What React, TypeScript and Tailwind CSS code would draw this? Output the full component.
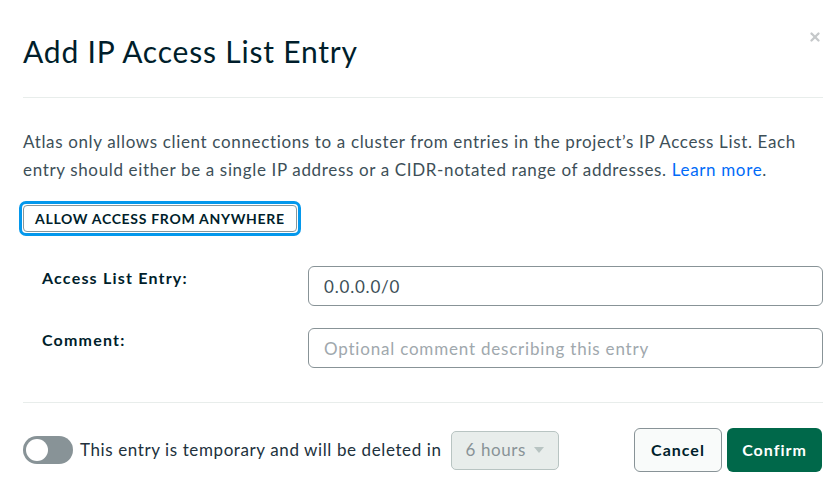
import { X } from 'lucide-react';

export default function App() {
  return (
    <div className="w-[838px] h-[499px] bg-white text-[#21313c] font-['Lato','Liberation_Sans',sans-serif]">
      {/* Header */}
      <div className="relative pl-[23px] pr-[15px] pt-[33px]">
        <h1 className="text-[30px] leading-[37px] font-normal tracking-[0.8px] text-[#001e2b]">Add IP Access List Entry</h1>
        <button className="absolute right-[16px] top-[30px] text-[#c5c8ca]">
          <X className="w-[14px] h-[14px]" strokeWidth={4} />
        </button>
        <div className="mt-[27px] border-t border-[#e8edeb]" />
      </div>

      {/* Body */}
      <div className="pl-[23px] pr-[15px] pt-[30px]">
        <p className="text-[17px] leading-[28px] tracking-[0.65px] text-[#3d4f58] whitespace-nowrap">
          Atlas only allows client connections to a cluster from entries in the project’s IP Access List. Each
          <br />
          entry should either be a single IP address or a CIDR-notated range of addresses.{' '}
          <a className="text-[#016bf8]">Learn more</a>.
        </p>

        <div className="mt-[17px] -ml-[4px] inline-block rounded-[7px] border-[3px] border-[#0498ec] p-px">
          <button className="h-[27px] px-[11px] rounded-[4px] border border-[#89979b] bg-white text-[14px] font-bold tracking-[0.7px] text-[#001e2b]">
            ALLOW ACCESS FROM ANYWHERE
          </button>
        </div>

        <div className="mt-[30px] flex flex-col gap-[22px] pl-[19px]">
          <div className="flex items-start">
            <label className="w-[266px] text-[16px] leading-[24px] font-bold tracking-[1.2px] text-[#001e2b]">Access List Entry:</label>
            <input
              className="flex-1 h-[40px] rounded-[6px] border border-[#889397] px-[15px] text-[17px] tracking-[0.8px] text-[#3d4f58] outline-none"
              defaultValue="0.0.0.0/0"
            />
          </div>
          <div className="flex items-start">
            <label className="w-[266px] text-[16px] leading-[24px] font-bold tracking-[1.2px] text-[#001e2b]">Comment:</label>
            <input
              className="flex-1 h-[40px] rounded-[6px] border border-[#889397] px-[15px] text-[17px] tracking-[0.8px] text-[#3d4f58] placeholder:text-[#a0a8ad] outline-none"
              placeholder="Optional comment describing this entry"
            />
          </div>
        </div>

        <div className="mt-[34px] border-t border-[#e8edeb]" />
      </div>

      {/* Footer */}
      <div className="pl-[23px] pr-[16px] pt-[25px] flex items-center">
        <div className="w-[50px] h-[28px] rounded-full bg-[#889397] p-[3px] flex items-center">
          <div className="w-[22px] h-[22px] rounded-full bg-white" />
        </div>
        <span className="ml-[7px] text-[17px] tracking-[0.6px] text-[#21313c] whitespace-nowrap">This entry is temporary and will be deleted in</span>
        <div className="ml-[10px] w-[108px] h-[39px] rounded-[5px] border border-[#b8c4c2] bg-[#e8edeb] flex items-center justify-between pl-[13px] pr-[14px] text-[17px] tracking-[0.6px] text-[#889397]">
          <span>6 hours</span>
          <svg width="10" height="6" viewBox="0 0 10 6" className="fill-[#b8c4c2]">
            <path d="M0 0h10L5 6z" />
          </svg>
        </div>
        <div className="ml-auto flex gap-[5px]">
          <button className="h-[44px] w-[88px] rounded-[6px] border border-[#889397] bg-[#f9fbfa] text-[16px] font-bold tracking-[1px] text-[#001e2b]">
            Cancel
          </button>
          <button className="h-[44px] w-[95px] rounded-[6px] bg-[#00684a] text-[16px] font-bold tracking-[1px] text-white">
            Confirm
          </button>
        </div>
      </div>
    </div>
  );
}
